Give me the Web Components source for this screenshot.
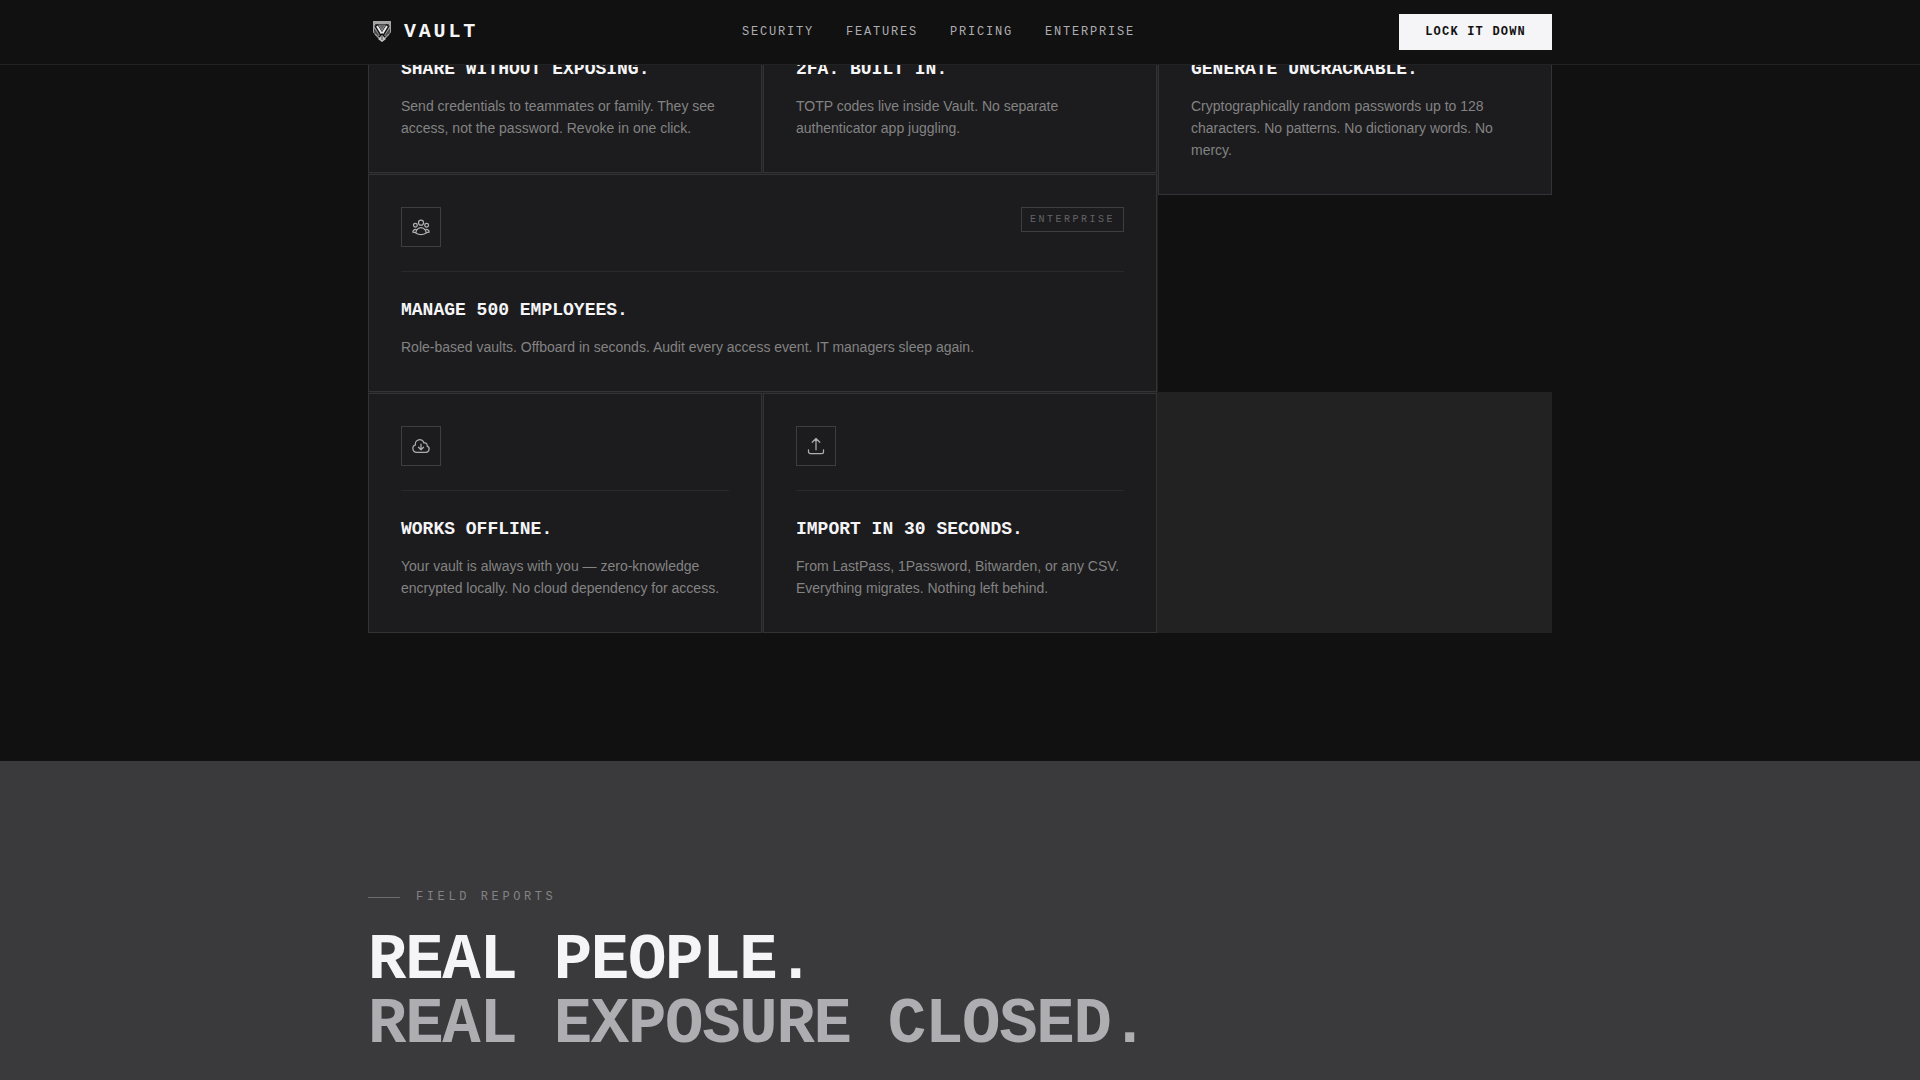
<!DOCTYPE html>
<html lang="en">
<head>
<meta charset="utf-8">
<title>Vault</title>
<style>
    :root {
        --bg: #111111;
        --bg-card: #1c1c1e;
        --bg-raised: #3a3a3c;
        --line: #222222;
        --line-card: #333335;
        --line-strong: #3e3e40;
        --text: #f5f5f7;
        --text-soft: #aeaeb2;
        --text-muted: #838383;
        --text-faint: #636366;
        --mono: "Liberation Mono", "Courier New", monospace;
        --sans: "Liberation Sans", Arial, sans-serif;
    }
    body {
        margin: 0;
        background: var(--bg);
        color: var(--text);
        font-family: var(--sans);
    }
</style>
</head>
<body>

<vault-page>
    <vault-header slot="header">
        <a href="#security">SECURITY</a>
        <a href="#features">FEATURES</a>
        <a href="#pricing">PRICING</a>
        <a href="#enterprise">ENTERPRISE</a>
    </vault-header>

    <feature-grid id="features">
        <feature-card icon="share">
            <span slot="title">SHARE WITHOUT EXPOSING.</span>
            Send credentials to teammates or family. They see access, not the password. Revoke in one click.
        </feature-card>
        <feature-card icon="lock">
            <span slot="title">2FA. BUILT IN.</span>
            TOTP codes live inside Vault. No separate authenticator app juggling.
        </feature-card>
        <feature-card icon="key" tall>
            <span slot="title">GENERATE UNCRACKABLE.</span>
            Cryptographically random passwords up to 128 characters. No patterns. No dictionary words. No mercy.
        </feature-card>
        <feature-card icon="team" wide>
            <span slot="badge">ENTERPRISE</span>
            <span slot="title">MANAGE 500 EMPLOYEES.</span>
            Role-based vaults. Offboard in seconds. Audit every access event. IT managers sleep again.
        </feature-card>
        <feature-card icon="cloud">
            <span slot="title">WORKS OFFLINE.</span>
            Your vault is always with you — zero-knowledge encrypted locally. No cloud dependency for access.
        </feature-card>
        <feature-card icon="upload">
            <span slot="title">IMPORT IN 30 SECONDS.</span>
            From LastPass, 1Password, Bitwarden, or any CSV. Everything migrates. Nothing left behind.
        </feature-card>
    </feature-grid>

    <section-heading>
        <span slot="label">FIELD REPORTS</span>
        <span>REAL PEOPLE.</span>
        <span slot="second">REAL EXPOSURE CLOSED.</span>
    </section-heading>
</vault-page>

<template id="page-template">
    <style>
        :host {
            display: flex;
            flex-direction: column;
            min-height: 100vh;
        }
    </style>
    <slot name="header"></slot>
    <slot></slot>
</template>

<template id="header-template">
    <style>
        :host {
            display: block;
            position: sticky;
            top: 0;
            z-index: 10;
            background: var(--bg);
            border-bottom: 1px solid var(--line);
        }
        .bar {
            display: flex;
            align-items: center;
            justify-content: space-between;
            box-sizing: border-box;
            max-width: 1280px;
            height: 64px;
            margin: 0 auto;
            padding: 0 48px;
        }
        .logo {
            display: flex;
            align-items: center;
            gap: 8px;
            color: var(--text);
            font: bold 20px/24px var(--mono);
            letter-spacing: 0.14em;
            text-decoration: none;
        }
        nav {
            display: flex;
            gap: 32px;
        }
        ::slotted(a) {
            color: var(--text-soft);
            font: 12px/20px var(--mono);
            letter-spacing: 0.15em;
            text-decoration: none;
        }
        button {
            height: 36px;
            padding: 0 26px;
            border: 0;
            background: var(--text);
            color: var(--bg);
            font: bold 12px/20px var(--mono);
            letter-spacing: 0.1em;
            cursor: pointer;
        }
    </style>
    <div class="bar">
        <a class="logo" href="#">
            <svg width="28" height="28" viewBox="0 0 28 28" aria-hidden="true">
                <path d="M5 3h18v11l-2 4-7 6-7-6-2-4z" fill="#a5a5a7"/>
                <path d="M7 6h14v1H7zM6 10l5 7-3 1-2-4zM22 10l-5 7 3 1 2-4z" fill="#4a4a4c"/>
                <path d="M8 7l6 10 6-10" fill="none" stroke="#111" stroke-width="4"/>
                <path d="M9 8l5 8 5-8" fill="none" stroke="#e8e8ea" stroke-width="2"/>
                <path d="M11 7h6l-3 5z" fill="#68686a"/>
                <path d="M5 15l6 3 3-3 3 3 6-3v4l-9 5-9-5z" fill="#111"/>
                <path d="M7 16l4 4M21 16l-4 4" stroke="#99999b" stroke-width="1.5"/>
                <path d="M14 17l4 4-4 3-4-3z" fill="#c5c5c7"/>
                <path d="M14 18v4" stroke="#444446" stroke-width="1"/>
            </svg>
            <span>VAULT</span>
        </a>
        <nav><slot></slot></nav>
        <button type="button">LOCK IT DOWN</button>
    </div>
</template>

<template id="grid-template">
    <style>
        :host {
            display: block;
            box-sizing: border-box;
            width: 100%;
            max-width: 1280px;
            /* the section sits part way under the sticky header */
            margin: -132px auto 0;
            padding: 0 48px 128px;
        }
        .grid {
            display: grid;
            grid-template-columns: repeat(3, 1fr);
            gap: 1px;
            background: var(--line);
        }
        ::slotted([wide]) {
            grid-column: span 2;
        }
        ::slotted([tall]) {
            grid-row: span 2;
        }
    </style>
    <div class="grid"><slot></slot></div>
</template>

<template id="card-template">
    <style>
        :host {
            display: block;
            background: var(--bg);
        }
        article {
            box-sizing: border-box;
            height: 100%;
            padding: 32px 32px 33px;
            background: var(--bg-card);
            border: 1px solid var(--line-card);
        }
        :host([tall]) article {
            height: auto;
        }
        .top {
            display: flex;
            align-items: flex-start;
            justify-content: space-between;
            padding-bottom: 24px;
            border-bottom: 1px solid #2a2a2c;
        }
        .icon {
            display: flex;
            align-items: center;
            justify-content: center;
            box-sizing: border-box;
            width: 40px;
            height: 40px;
            border: 1px solid var(--line-strong);
            color: var(--text-soft);
        }
        svg {
            width: 20px;
            height: 20px;
            fill: none;
            stroke: currentColor;
            stroke-width: 1.5;
            stroke-linecap: round;
            stroke-linejoin: round;
        }
        ::slotted([slot="badge"]) {
            padding: 4px 8px;
            border: 1px solid var(--line-strong);
            color: var(--text-faint);
            font: 10px/15px var(--mono);
            letter-spacing: 0.25em;
        }
        h3 {
            margin: 24px 0 11px;
            color: var(--text);
            font: bold 18px/29px var(--mono);
        }
        p {
            margin: 0;
            color: var(--text-muted);
            font: 14px/22px var(--sans);
        }
    </style>
    <article>
        <div class="top">
            <div class="icon"><svg viewBox="0 0 24 24" aria-hidden="true"><path/></svg></div>
            <slot name="badge"></slot>
        </div>
        <h3><slot name="title"></slot></h3>
        <p><slot></slot></p>
    </article>
</template>

<template id="heading-template">
    <style>
        :host {
            display: block;
            flex: 1;
            background: var(--bg-raised);
        }
        .inner {
            box-sizing: border-box;
            max-width: 1280px;
            margin: 0 auto;
            padding: 128px 48px 0;
        }
        .label {
            display: flex;
            align-items: center;
            gap: 16px;
            margin-bottom: 24px;
            color: var(--text-muted);
            font: 12px/16px var(--mono);
            letter-spacing: 0.3em;
        }
        .label::before {
            content: "";
            width: 32px;
            height: 1px;
            background: #6c6c6e;
        }
        h2 {
            margin: 0;
            color: var(--text);
            font: bold 64px/64px var(--mono);
            letter-spacing: -0.02em;
        }
        .second {
            display: block;
            color: var(--text-soft);
        }
    </style>
    <div class="inner">
        <div class="label"><slot name="label"></slot></div>
        <h2><slot></slot><span class="second"><slot name="second"></slot></span></h2>
    </div>
</template>

<script>
    const ICONS = {
        share: 'M7.217 10.907a2.25 2.25 0 1 0 0 2.186m0-2.186 9.566-5.314m-9.566 7.5 9.566 5.314m0 0a2.25 2.25 0 1 0 3.935 2.186 2.25 2.25 0 0 0-3.935-2.186Zm0-12.814a2.25 2.25 0 1 0 3.933-2.185 2.25 2.25 0 0 0-3.933 2.185Z',
        lock: 'M16.5 10.5V6.75a4.5 4.5 0 1 0-9 0v3.75M6.75 21.75h10.5a2.25 2.25 0 0 0 2.25-2.25v-6.75a2.25 2.25 0 0 0-2.25-2.25H6.75a2.25 2.25 0 0 0-2.25 2.25v6.75a2.25 2.25 0 0 0 2.25 2.25Z',
        key: 'M15.75 5.25a3 3 0 0 1 3 3m3 0a6 6 0 0 1-7.03 5.91L10.5 17.25H8.25v2.25H6v2.25H2.25v-2.82l6.59-6.59A6 6 0 1 1 21.75 8.25Z',
        team: 'M18 18.72a9.094 9.094 0 0 0 3.741-.479 3 3 0 0 0-4.682-2.72m.94 3.198.001.031c0 .225-.012.447-.037.666A11.944 11.944 0 0 1 12 21c-2.17 0-4.207-.576-5.963-1.584A6.062 6.062 0 0 1 6 18.719m12 0a5.971 5.971 0 0 0-.941-3.197m0 0A5.995 5.995 0 0 0 12 12.75a5.995 5.995 0 0 0-5.058 2.772m0 0a3 3 0 0 0-4.681 2.72 8.986 8.986 0 0 0 3.74.477m.94-3.197a5.971 5.971 0 0 0-.94 3.197M15 6.75a3 3 0 1 1-6 0 3 3 0 0 1 6 0Zm6 3a2.25 2.25 0 1 1-4.5 0 2.25 2.25 0 0 1 4.5 0Zm-13.5 0a2.25 2.25 0 1 1-4.5 0 2.25 2.25 0 0 1 4.5 0Z',
        cloud: 'M12 9.75v6.75m0 0-3-3m3 3 3-3m-8.25 6a4.5 4.5 0 0 1-1.41-8.775 5.25 5.25 0 0 1 10.233-2.33 3 3 0 0 1 3.758 3.848A3.752 3.752 0 0 1 18 19.5H6.75Z',
        upload: 'M3 16.5v2.25A2.25 2.25 0 0 0 5.25 21h13.5A2.25 2.25 0 0 0 21 18.75V16.5m-13.5-9L12 3m0 0 4.5 4.5M12 3v13.5',
    };

    class TemplateElement extends HTMLElement {
        constructor(templateId) {
            super();
            const template = document.getElementById(templateId);
            this.attachShadow({mode: 'open'}).appendChild(template.content.cloneNode(true));
        }
    }

    class VaultPage extends TemplateElement {
        constructor() {
            super('page-template');
        }
    }

    class VaultHeader extends TemplateElement {
        constructor() {
            super('header-template');
        }
    }

    class FeatureGrid extends TemplateElement {
        constructor() {
            super('grid-template');
        }
    }

    class FeatureCard extends TemplateElement {
        constructor() {
            super('card-template');
        }

        connectedCallback() {
            const icon = ICONS[this.getAttribute('icon')];
            if (icon) {
                this.shadowRoot.querySelector('path').setAttribute('d', icon);
            }
        }
    }

    class SectionHeading extends TemplateElement {
        constructor() {
            super('heading-template');
        }
    }

    customElements.define('vault-page', VaultPage);
    customElements.define('vault-header', VaultHeader);
    customElements.define('feature-grid', FeatureGrid);
    customElements.define('feature-card', FeatureCard);
    customElements.define('section-heading', SectionHeading);
</script>
</body>
</html>
